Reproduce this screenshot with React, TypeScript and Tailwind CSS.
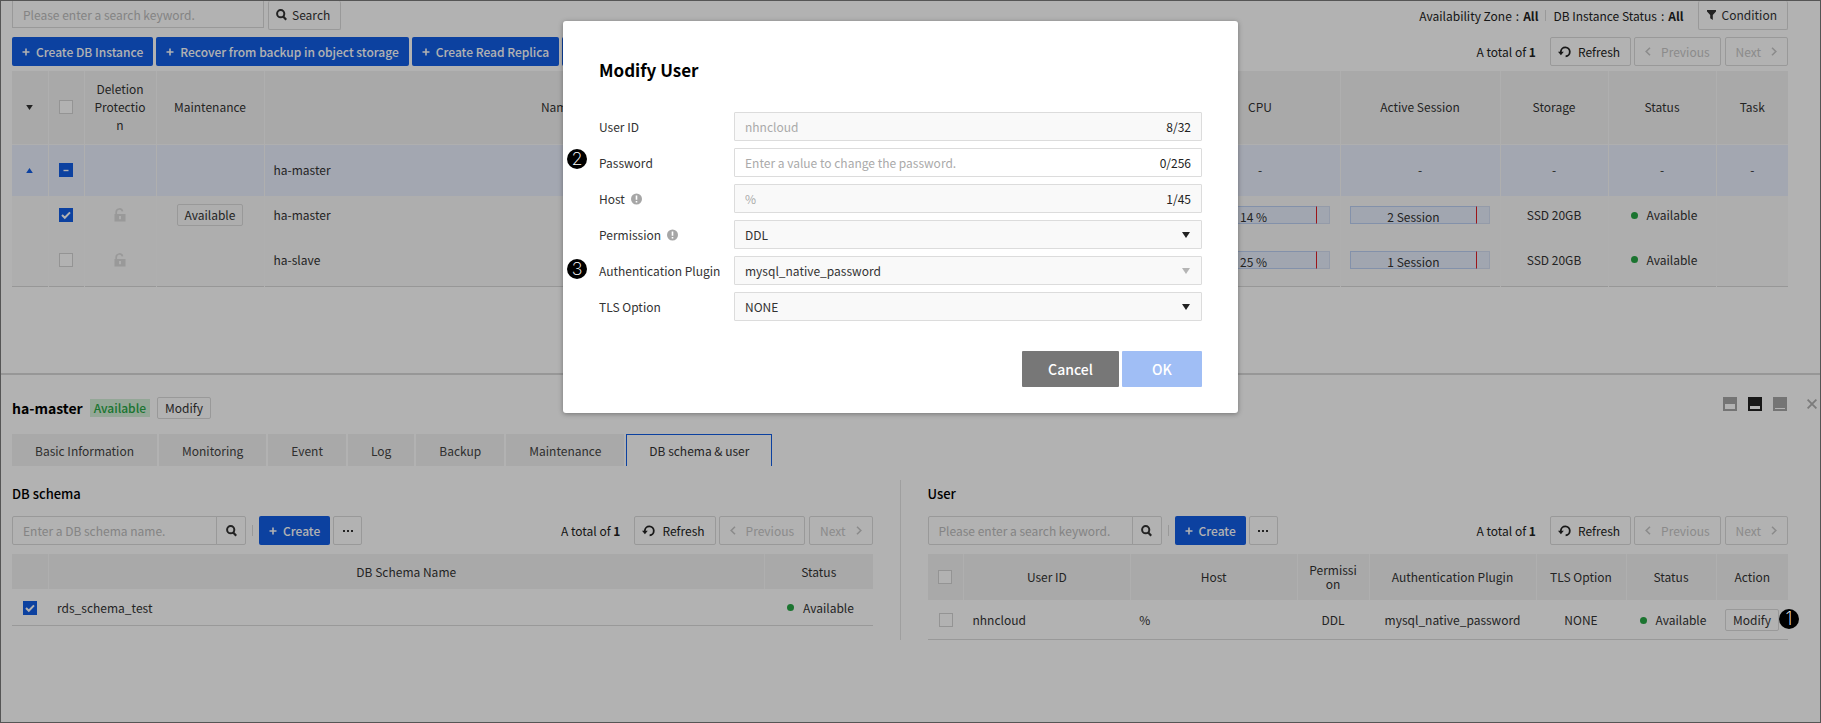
import React from "react";

const caret = "M0 0h8L4 6z";

function Plus() {
  return (
    <svg width="8" height="8" viewBox="0 0 8 8" className="shrink-0" aria-hidden="true">
      <path d="M4 0.5v7M0.5 4h7" stroke="currentColor" strokeWidth="1.6" />
    </svg>
  );
}

function Magnifier() {
  return (
    <svg width="11" height="12" viewBox="0 0 11 12" className="shrink-0" aria-hidden="true">
      <circle cx="4.7" cy="4.7" r="3.6" fill="none" stroke="currentColor" strokeWidth="2" />
      <path d="M7.2 7.6l3 3.2" stroke="currentColor" strokeWidth="2.2" />
    </svg>
  );
}

function Chevron({ right = false }: { right?: boolean }) {
  return (
    <svg width="6" height="9" viewBox="0 0 6 9" className="shrink-0" aria-hidden="true">
      <path d={right ? "M1 0.8l3.8 3.7L1 8.2" : "M5 0.8L1.2 4.5L5 8.2"} fill="none" stroke="currentColor" strokeWidth="1.6" />
    </svg>
  );
}

function RefreshIcon() {
  return (
    <svg width="13" height="12" viewBox="0 0 13 12" className="shrink-0" aria-hidden="true">
      <path d="M2.8 6.6V5.6A4.5 4.5 0 1 1 7.6 10.4" fill="none" stroke="currentColor" strokeWidth="1.8" />
      <path d="M0 5.8h5.8L2.9 9.2z" fill="currentColor" />
    </svg>
  );
}

function Funnel() {
  return (
    <svg width="9" height="10" viewBox="0 0 9 10" className="shrink-0" aria-hidden="true">
      <path d="M0 0h9v1.6L5.8 5v5L3.2 8.2V5L0 1.6z" fill="currentColor" />
    </svg>
  );
}

function Unlocked() {
  return (
    <svg width="12" height="14" viewBox="0 0 12 14" className="mx-auto text-[#dcdcdc]" aria-hidden="true">
      <path d="M2.2 6V4.2a3.2 3.2 0 0 1 6.3-.8" fill="none" stroke="currentColor" strokeWidth="1.7" />
      <path fillRule="evenodd" d="M.5 6h11v7.6H.5zM5 8v3.2h2V8z" fill="currentColor" />
    </svg>
  );
}

function Info() {
  return (
    <svg width="11" height="12" viewBox="0 0 11 12" className="shrink-0" aria-hidden="true">
      <circle cx="5.5" cy="6" r="5.5" fill="#a6a6a6" />
      <path d="M5.5 2.6v4.2M5.5 8v1.6" stroke="#fff" strokeWidth="1.6" />
    </svg>
  );
}

function Check({ label, state = "off" }: { label: string; state?: "off" | "on" | "mixed" }) {
  return (
    <span className="relative mx-auto block size-[14px]">
      <input
        type="checkbox"
        aria-label={label}
        defaultChecked={state !== "off"}
        className="block size-[14px] appearance-none border border-[#d5d5d5] bg-white checked:border-[#125de6] checked:bg-[#125de6]"
      />
      {state !== "off" && (
        <svg viewBox="0 0 14 14" className="pointer-events-none absolute inset-0 size-[14px]" aria-hidden="true">
          <path d={state === "on" ? "M3 7l2.8 2.8L11 4.4" : "M4.5 7.5h5"} fill="none" stroke="#fff" strokeWidth={state === "on" ? 2 : 1.4} />
        </svg>
      )}
    </span>
  );
}

const btn = "flex h-[29px] items-center rounded-[2px] border border-[#dcdcdc] whitespace-nowrap";
const blueBtn = "flex h-[29px] items-center gap-[6px] rounded-[2px] bg-[#125de6] px-[10px] font-medium whitespace-nowrap text-white";
const smallBtn = "h-[22px] rounded-[2px] border border-[#dcdcdc] px-[7px] leading-[20px]";

function Pager() {
  return (
    <div className="flex items-center">
      <span className="mr-[14px] text-[#222222]">A total of <b>1</b></span>
      <button className={btn + " gap-[7px] pr-[10px] pl-[7px] text-[#222222]"}><RefreshIcon />Refresh</button>
      <button className={btn + " ml-[3px] gap-[10px] px-[10px] text-[#c8c8c8]"} disabled><Chevron />Previous</button>
      <button className={btn + " ml-1 gap-[10px] px-[10px] text-[#c8c8c8]"} disabled>Next<Chevron right /></button>
    </div>
  );
}

function Toolbar({ label, placeholder }: { label: string; placeholder: string }) {
  return (
    <div className="flex items-center justify-between">
      <div className="flex items-center">
        <input
          aria-label={label}
          placeholder={placeholder}
          className="h-[29px] w-[205px] rounded-l-[2px] border border-[#dcdcdc] bg-transparent px-[10px] placeholder:text-[#bdbdbd]"
        />
        <button aria-label="Search" className="-ml-px flex h-[29px] w-[30px] items-center justify-center rounded-r-[2px] border border-[#dcdcdc]"><Magnifier /></button>
        <span className="mx-[6px] h-[11px] w-px bg-[#dcdcdc]" />
        <button className={blueBtn}><Plus />Create</button>
        <button aria-label="More" className={btn + " ml-[3px] w-[29px] justify-center"}>
          <svg width="10" height="2" viewBox="0 0 10 2" aria-hidden="true"><path d="M0 0h2v2H0zM4 0h2v2H4zM8 0h2v2H8z" fill="currentColor" /></svg>
        </button>
      </div>
      <Pager />
    </div>
  );
}

function Status() {
  return (
    <span className="flex items-center justify-center gap-[9px] pl-1">
      <i className="size-[7px] rounded-full bg-[#28a745]" />
      Available
    </span>
  );
}

function Gauge({ children }: { children: React.ReactNode }) {
  return (
    <div className="mx-auto h-[18px] w-[140px] border border-[#d4def2] bg-[#e7eefc]">
      <div className="-mt-px -ml-px h-[18px] w-[127px] border border-[#bcd0f4] border-r-[#e01f24] text-center leading-[20px]">{children}</div>
    </div>
  );
}

function Step({ n, className }: { n: number; className: string }) {
  return (
    <span className={"absolute flex size-5 items-center justify-center rounded-full bg-black font-['Inter',sans-serif] text-[18px] leading-none font-extralight text-white " + className}>{n}</span>
  );
}

const instances = [
  { name: "ha-master", on: true, cpu: "14 %", session: "2 Session" },
  { name: "ha-slave", on: false, cpu: "25 %", session: "1 Session" },
];

const tabs = ["Basic Information", "Monitoring", "Event", "Log", "Backup", "Maintenance"];

function Filter({ name }: { name: string }) {
  return <span className="flex gap-1 text-[#222222]"><span>{name}</span><span>:</span><b>All</b></span>;
}

function Instances() {
  return (
    <section className="h-[374px] border-b-2 border-[#d9d9d9] pr-8 pl-[11px]">
      <div className="flex h-7 items-start justify-between">
        <div className="flex items-start gap-1">
          <input aria-label="Search keyword" placeholder="Please enter a search keyword." className="h-[27px] w-[252px] border border-t-0 border-[#dcdcdc] bg-transparent px-[10px] placeholder:text-[#bdbdbd]" />
          <button className={btn + " h-7 gap-[5px] border-t-0 pr-[10px] pl-[7px]"}><Magnifier />Search</button>
        </div>
        <div className="flex items-center">
          <Filter name="Availability Zone" />
          <span className="mx-[7px] h-[11px] w-px bg-[#dcdcdc]" />
          <Filter name="DB Instance Status" />
          <button className={btn + " ml-[14px] h-7 gap-[6px] border-t-0 pr-[10px] pl-2"}><Funnel />Condition</button>
        </div>
      </div>
      <div className="mt-2 flex items-start justify-between">
        <div className="flex gap-[3px]">
          <button className={blueBtn}><Plus />Create DB Instance</button>
          <button className={blueBtn}><Plus />Recover from backup in object storage</button>
          <button className={blueBtn}><Plus />Create Read Replica</button>
          <button aria-label="More actions" className={blueBtn}><Plus /></button>
        </div>
        <Pager />
      </div>
      <table className="mt-[5px] w-full table-fixed border-b border-[#d9d9d9] text-center [&_td+td]:border-l [&_td+td]:border-[#fbfbfb] [&_th+th]:border-l [&_th+th]:border-[#fbfbfb]">
        <colgroup>
          <col className="w-9" /><col className="w-9" /><col className="w-[72px]" /><col className="w-[108px]" /><col />
          <col className="w-[329px]" /><col className="w-[160px]" /><col className="w-[160px]" /><col className="w-[108px]" /><col className="w-[108px]" /><col className="w-[72px]" />
        </colgroup>
        <thead>
          <tr className="h-[73px] border-b border-[#fbfbfb] bg-[#f3f3f3] [&>th]:font-normal">
            <th><svg width="7" height="5" viewBox="0 0 8 6" className="mx-auto" aria-hidden="true"><path d={caret} fill="currentColor" /></svg></th>
            <th><Check label="Select all instances" /></th>
            <th className="px-[9px] leading-[18px] break-words">Deletion Protection</th>
            <th>Maintenance</th><th>Name</th><th /><th>CPU</th><th>Active Session</th><th>Storage</th><th>Status</th><th>Task</th>
          </tr>
        </thead>
        <tbody>
          <tr className="h-[52px] bg-[#eaf0fe]">
            <td><svg width="7" height="5" viewBox="0 0 8 6" className="mx-auto text-[#125de6]" aria-hidden="true"><path d="M0 6h8L4 0z" fill="currentColor" /></svg></td>
            <td><Check label="Select group" state="mixed" /></td>
            <td /><td /><td className="px-[9px] text-left">ha-master</td><td />
            <td>-</td><td>-</td><td>-</td><td>-</td><td>-</td>
          </tr>
          {instances.map((r) => (
            <tr key={r.name} className="h-[45px] bg-[#f9f9f9] [&>td]:pb-[7px]">
              <td /><td><Check label={"Select " + r.name} state={r.on ? "on" : "off"} /></td>
              <td><Unlocked /></td>
              <td>{r.on && <button className={smallBtn}>Available</button>}</td>
              <td className="px-[9px] text-left">{r.name}</td><td />
              <td><Gauge>{r.cpu}</Gauge></td><td><Gauge>{r.session}</Gauge></td>
              <td>SSD 20GB</td><td><Status /></td><td />
            </tr>
          ))}
        </tbody>
      </table>
    </section>
  );
}

function PaneIcon({ dark = false, path }: { dark?: boolean; path: string }) {
  return (
    <svg width="14" height="14" viewBox="0 0 14 14" className={dark ? "text-[#222222]" : "text-[#a6a6a6]"} aria-hidden="true">
      <path fillRule="evenodd" d={"M0 0h14v14H0z" + path} fill="currentColor" />
    </svg>
  );
}

function Details() {
  return (
    <section className="pl-[11px]">
      <div className="mt-[22px] flex items-center">
        <h2 className="text-[14px] font-bold text-black">ha-master</h2>
        <span className="ml-[7px] h-[18px] bg-[#d4efd9] px-1 leading-[18px] font-medium text-[#28a745]">Available</span>
        <button className={smallBtn + " ml-[7px]"}>Modify</button>
        <div className="mr-[3px] mb-2 ml-auto flex items-center gap-[11px]">
          <button aria-label="Expand panel"><PaneIcon path="M2 7h10v5H2z" /></button>
          <button aria-label="Split panel"><PaneIcon dark path="M2 9h10v3H2z" /></button>
          <button aria-label="Collapse panel"><PaneIcon path="M2 11h10v1H2z" /></button>
          <button aria-label="Close" className="ml-[9px] text-[#b0b0b0]">
            <svg width="10" height="10" viewBox="0 0 10 10" aria-hidden="true"><path d="M.6 .6l8.8 8.8M9.4 .6L.6 9.4" stroke="currentColor" strokeWidth="1.8" /></svg>
          </button>
        </div>
      </div>
      <nav className="mt-[15px] flex gap-[2px]">
        {tabs.map((t) => (
          <button key={t} className="h-8 bg-[#f3f3f3] px-[23px] pt-[2px] text-[#444444]">{t}</button>
        ))}
        <button className="h-8 border border-b-0 border-[#125de6] px-[22px] pt-px">DB schema &amp; user</button>
      </nav>
      <div className="mt-[14px] mr-8 grid h-[160px] grid-cols-[1fr_1px_1fr] gap-x-[27px]">
        <div>
          <h3 className="mt-[3px] mb-3 text-[13px] leading-[21px] font-medium text-black">DB schema</h3>
          <Toolbar label="DB schema name" placeholder="Enter a DB schema name." />
          <table className="mt-[9px] w-full table-fixed border-b border-[#dcdcdc] text-center [&_th+th]:border-l [&_th+th]:border-[#fbfbfb]">
            <colgroup><col className="w-9" /><col /><col className="w-[108px]" /></colgroup>
            <thead><tr className="h-[35px] bg-[#f3f3f3] [&>th]:font-normal"><th /><th>DB Schema Name</th><th>Status</th></tr></thead>
            <tbody>
              <tr className="h-9 [&>td]:pt-[2px]"><td><Check label="Select rds_schema_test" state="on" /></td><td className="px-[9px] text-left">rds_schema_test</td><td><Status /></td></tr>
            </tbody>
          </table>
        </div>
        <div className="bg-[#e4e4e4]" />
        <div>
          <h3 className="mt-[3px] mb-3 text-[13px] leading-[21px] font-medium text-black">User</h3>
          <Toolbar label="User keyword" placeholder="Please enter a search keyword." />
          <table className="mt-[9px] w-full table-fixed border-b border-[#dcdcdc] text-center [&_th+th]:border-l [&_th+th]:border-[#fbfbfb]">
            <colgroup>
              <col className="w-9" /><col /><col /><col className="w-[72px]" /><col className="w-[167px]" /><col className="w-[90px]" /><col className="w-[90px]" /><col className="w-[72px]" />
            </colgroup>
            <thead>
              <tr className="h-[46px] bg-[#f3f3f3] [&>th]:font-normal">
                <th><Check label="Select all users" /></th><th>User ID</th><th>Host</th>
                <th className="px-[10px] leading-[14px] break-words">Permission</th>
                <th>Authentication Plugin</th><th>TLS Option</th><th>Status</th><th>Action</th>
              </tr>
            </thead>
            <tbody>
              <tr className="h-[39px] [&>td]:pt-[2px]">
                <td><Check label="Select nhncloud" /></td>
                <td className="px-[9px] text-left">nhncloud</td><td className="px-[9px] text-left">%</td>
                <td>DDL</td><td>mysql_native_password</td><td>NONE</td><td><Status /></td>
                <td><button className={smallBtn}>Modify</button></td>
              </tr>
            </tbody>
          </table>
        </div>
      </div>
    </section>
  );
}

function TextRow({ id, label, count, info = false, ...rest }: { id: string; label: string; count: string; info?: boolean; value?: string; placeholder?: string }) {
  return (
    <div className="flex h-[29px] items-center">
      <label htmlFor={id} className="flex w-[135px] items-center gap-[6px]">{label}{info && <Info />}</label>
      <div className={"flex h-full flex-1 items-center rounded-[1px] border border-[#dcdcdc] px-[10px] " + (rest.value ? "bg-[#f9f9f9]" : "bg-white")}>
        <input id={id} {...rest} readOnly={rest.value !== undefined} className="min-w-0 flex-1 bg-transparent text-[#aaaaaa] outline-none placeholder:text-[#aaaaaa]" />
        <span className="text-[#222222]">{count}</span>
      </div>
    </div>
  );
}

function SelectRow({ id, label, value, info = false, disabled = false }: { id: string; label: string; value: string; info?: boolean; disabled?: boolean }) {
  return (
    <div className="flex h-[29px] items-center">
      <label htmlFor={id} className="flex w-[135px] items-center gap-[6px]">{label}{info && <Info />}</label>
      <div className="relative h-full flex-1">
        <select id={id} disabled={disabled} className="h-full w-full appearance-none rounded-[1px] border border-[#dcdcdc] bg-[#f9f9f9] px-[10px] text-[#333333] opacity-100">
          <option>{value}</option>
        </select>
        <svg width="8" height="6" viewBox="0 0 8 6" className={"pointer-events-none absolute top-[12px] right-3 " + (disabled ? "text-[#b5b5b5]" : "text-[#222222]")} aria-hidden="true"><path d={caret} fill="currentColor" /></svg>
      </div>
    </div>
  );
}

function ModifyUser() {
  return (
    <div className="absolute inset-0 flex items-start justify-center bg-black/30 pt-5">
      <div role="dialog" aria-labelledby="dialog-title" className="relative ml-[-20px] w-[675px] rounded-[3px] bg-white px-9 pt-[36px] pb-[26px] shadow-[0_1px_5px_rgba(0,0,0,0.35)]">
        <h1 id="dialog-title" className="text-[17px] leading-[26px] font-bold text-black">Modify User</h1>
        <form className="mt-[29px] flex flex-col gap-[7px]">
          <TextRow id="user-id" label="User ID" value="nhncloud" count="8/32" />
          <TextRow id="password" label="Password" placeholder="Enter a value to change the password." count="0/256" />
          <TextRow id="host" label="Host" value="%" count="1/45" info />
          <SelectRow id="permission" label="Permission" value="DDL" info />
          <SelectRow id="plugin" label="Authentication Plugin" value="mysql_native_password" disabled />
          <SelectRow id="tls" label="TLS Option" value="NONE" />
        </form>
        <div className="mt-[30px] flex justify-end gap-[3px] text-[14px] font-medium text-white">
          <button className="h-9 w-[97px] rounded-[1px] bg-[#777777]">Cancel</button>
          <button className="h-9 w-[80px] rounded-[1px] bg-[#a0bef5]">OK</button>
        </div>
        <Step n={2} className="top-32 left-1" />
        <Step n={3} className="top-[238px] left-1" />
      </div>
    </div>
  );
}

export default function App() {
  return (
    <div className="relative min-h-screen border border-[#555555] bg-white font-['Noto_Sans_CJK_KR','Noto_Sans',sans-serif] text-[12px] leading-[18px] text-[#333333]">
      <Instances />
      <Details />
      <ModifyUser />
      <Step n={1} className="top-[608px] right-[21px]" />
    </div>
  );
}
